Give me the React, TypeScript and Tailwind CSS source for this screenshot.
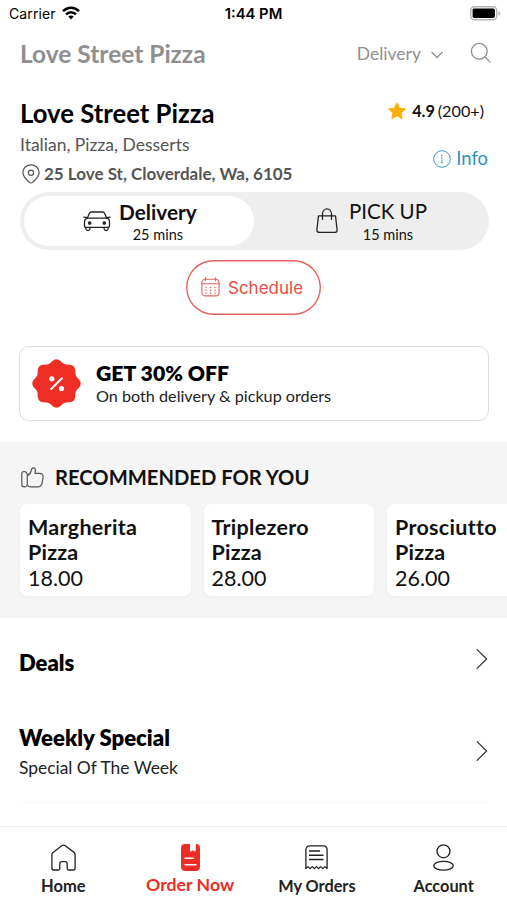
import React from "react";

const Wifi = () => (
  <svg className="h-[14px] w-[18px]" viewBox="0 0 18 14" fill="none" stroke="#000" strokeWidth="2.5">
    <path d="M1 5.2C5.5.6 12.5.6 17 5.2" />
    <path d="M4 8.4c2.9-2.9 7.1-2.9 10 0" />
    <path d="M6.3 10.6c1.6-1.5 3.8-1.5 5.4 0L9 13.4z" fill="#000" stroke="none" />
  </svg>
);

const Battery = () => (
  <svg className="h-[15px] w-[31px]" viewBox="0 0 31 15">
    <rect x="0.75" y="0.75" width="26" height="13" rx="3.8" fill="#fff" stroke="#b4b4b4" strokeWidth="1.4" />
    <rect x="2.6" y="2.6" width="22.3" height="9.3" rx="1.6" fill="#000" />
    <path d="M28.4 5v4.6c1.1-.4 1.7-1.3 1.7-2.3S29.5 5.4 28.4 5z" fill="#b4b4b4" />
  </svg>
);

const Search = () => (
  <svg className="h-[22px] w-[22px]" viewBox="0 0 22 22" fill="none" stroke="#8f8f8f" strokeWidth="1.3" strokeLinecap="round">
    <circle cx="9.3" cy="9.3" r="7.9" />
    <path d="M15 15l5.1 5.1" />
  </svg>
);

const Pin = () => (
  <svg className="h-[20px] w-[18px]" viewBox="0 0 18 20" fill="none" stroke="#555" strokeWidth="1.2">
    <path d="M9 19c-.8 0-1.5-.4-2.2-1.1C4.2 15.4.9 12.7.9 8.6.9 4.1 4.5.9 9 .9s8.1 3.2 8.1 7.7c0 4.1-3.3 6.8-5.9 9.3C10.5 18.6 9.8 19 9 19z" />
    <circle cx="9" cy="8.7" r="2.6" />
  </svg>
);

const Star = () => (
  <svg className="h-[18px] w-[18px]" viewBox="0 0 18 18" fill="#fbaf08" stroke="#fbaf08" strokeWidth="1.5" strokeLinejoin="round">
    <path d="M9 1.3l2.3 5 5.6.6-4.2 3.7 1.2 5.6L9 13.4l-4.9 2.8 1.2-5.6L1.1 6.9l5.600-.6z" />
  </svg>
);

const InfoIcon = () => (
  <svg className="h-[18px] w-[18px]" viewBox="0 0 18 18" fill="none" stroke="#3b9ac6" strokeWidth="1">
    <circle cx="9" cy="9" r="8.3" />
    <path d="M7.900 7.700H9v5M7.700 12.700h2.600" strokeWidth=".8" />
    <circle cx="8.9" cy="5.2" r=".4" fill="#3b9ac6" />
  </svg>
);

const Car = () => (
  <svg className="-mt-px h-[20px] w-[28px]" viewBox="0 0 28 20" fill="none" stroke="#222" strokeWidth="1.3" strokeLinecap="round" strokeLinejoin="round">
    <path d="M4.300 7.300l2-4.800Q6.900 1 8.600 1h10.800q1.700 0 2.300 1.500l2 4.800" />
    <path d="M5 7.200h18c2 0 3.500 1.600 3.500 3.600V15q0 1.300-1.300 1.300H2.800Q1.500 16.300 1.500 15v-4.200c0-2 1.500-3.600 3.500-3.600z" />
    <path d="M.9 6.200l3.200.4M27.100 6.200l-3.200.4" />
    <path d="M2.900 16.500v1.300q0 1.500 1.500 1.500h1q1.500 0 1.500-1.500v-1.300M21.100 16.500v1.300q0 1.500 1.500 1.500h1q1.500 0 1.500-1.500v-1.300" />
    <circle cx="6.7" cy="12" r="1.2" fill="#555" />
    <circle cx="21.3" cy="12" r="1.2" fill="#555" />
  </svg>
);

const Bag = () => (
  <svg className="h-[26px] w-[22px]" viewBox="0 0 22 26" fill="none" stroke="#222" strokeWidth="1.3" strokeLinecap="round" strokeLinejoin="round">
    <path d="M2.500 7.800h17l1.600 13.900q.2 2.700-2.500 2.700H3.400Q.7 24.400.9 21.700z" />
    <path d="M6.500 11.300V6.200C6.500 3.200 8.500.900 11 .900s4.500 2.300 4.500 5.300v5.100" />
  </svg>
);

const Calendar = () => (
  <svg className="-mt-[4px] h-[20px] w-[19px]" viewBox="0 0 19 20" fill="none" stroke="#e5635c" strokeWidth="1.1" strokeLinecap="round">
    <rect x=".9" y="2.2" width="17.2" height="16.7" rx="3.5" />
    <path d="M1 6.700h17M4.500.8v2.800M14.500.8v2.800" />
    <path strokeWidth="1.5" d="M5 10.500h.1M9.500 10.500h.1M14 10.500h.1M5 13.200h.1M9.500 13.200h.1M14 13.200h.1M5 15.900h.1M9.500 15.900h.1M14 15.900h.1" />
  </svg>
);

// Eight-lobed seal outline, sampled in polar coordinates around the centre.
const sealPoints = Array.from({ length: 180 }, (_, i) => {
  const a = (i * Math.PI) / 90;
  const r = 22.6 + 1.6 * Math.cos(8 * a);
  return `${(24.5 + r * Math.cos(a)).toFixed(2)},${(24.5 + r * Math.sin(a)).toFixed(2)}`;
}).join(" ");

const DiscountBadge = () => (
  <svg className="h-[49px] w-[49px]" viewBox="0 0 49 49">
    <polygon points={sealPoints} fill="#ee2d24" />
    <path d="M19.200 30L29.900 19.300" stroke="#fff" strokeWidth="2" strokeLinecap="round" />
    <circle cx="19.8" cy="19.8" r="2.6" fill="#fff" />
    <circle cx="29.5" cy="29.5" r="2.6" fill="#fff" />
  </svg>
);

const ThumbUp = () => (
  <svg className="h-[21px] w-[23px]" viewBox="0 0 23 21" fill="none" stroke="#555" strokeWidth="1.2" strokeLinejoin="round">
    <path d="M6.300 7.500Q5.700 4.500 3 4.500.8 4.500.8 7v10.200q0 2.600 2.600 2.600 2.900 0 2.900-2.800z" />
    <path d="M6.300 8.300c2.300-.5 3.300-2 3.800-4.300.3-1.900.7-3.200 2.200-3.200 1.700 0 2.300 1.400 2.100 3.100-.1 1.200-.6 1.700-.4 2.500h4.400c2.500 0 4 1.500 3.700 3.800l-1 6c-.4 2.300-1.500 3.600-3.900 3.600H9.800c-1.700 0-2.500-.5-3.500-1.500" />
  </svg>
);

const Chevron = () => (
  <svg className="h-[22px] w-[12px]" viewBox="0 0 12 22" fill="none" stroke="#333" strokeWidth="1.2" strokeLinecap="round" strokeLinejoin="round">
    <path d="M1.100 1.600L10.600 11l-9.500 9.400" />
  </svg>
);

const Home = () => (
  <svg className="h-[27px] w-[25px]" viewBox="0 0 25 27" fill="none" stroke="#222" strokeWidth="1.3" strokeLinejoin="round">
    <path d="M11 1.600L2 8.400Q.9 9.200.9 10.500V24q0 2 2 2h4.500q1.400 0 1.400-1.500v-4.700q0-2.100 2.100-2.100h3.200q2.100 0 2.100 2.100v4.700q0 1.500 1.400 1.500h4.500q2 0 2-2V10.500q0-1.300-1.100-2.100L14 1.600q-1.500-1.100-3 0z" />
  </svg>
);

const OrderBook = () => (
  <svg className="h-[27px] w-[19px]" viewBox="0 0 19 27">
    <path d="M4 0h5v6.500q0 1.700 1.400.7l1.400-1 1.500 1q1.500 1 1.500-.7V0Q19 .2 19 4v18.500q0 4.500-4.500 4.500h-10Q0 27 0 22.500V4Q0 0 4 0z" fill="#ee2d24" />
    <path d="M4 14.300h8.500M4 20.700h11" stroke="#fff" strokeWidth="1.4" strokeLinecap="round" />
  </svg>
);

const Receipt = () => (
  <svg className="h-[25px] w-[23px]" viewBox="0 0 23 25" fill="none" stroke="#222" strokeWidth="1.3" strokeLinejoin="round">
    <path d="M.9 23.600V4.900Q.9.900 4.900.900h13.200q4 0 4 4v18.700l-2.120-2-2.120 2-2.120-2-2.120 2-2.120-2-2.120 2-2.120-2-2.120 2-2.120-2z" />
    <path d="M4 6h11M4 10.200h14.500M4 14.400h14.500" strokeWidth="1.5" />
  </svg>
);

const Account = () => (
  <svg className="h-[27px] w-[21px]" viewBox="0 0 21 27" fill="none" stroke="#222" strokeWidth="1.3">
    <circle cx="10.5" cy="7.3" r="6.5" />
    <ellipse cx="10.5" cy="21.8" rx="9.8" ry="4.4" />
  </svg>
);

const dishes = [
  { name: "Margherita", price: "18.00" },
  { name: "Triplezero", price: "28.00" },
  { name: "Prosciutto", price: "26.00" },
];

const tabs = [
  { label: "Home", icon: <Home />, style: "text-[16.5px] text-[#222]" },
  { label: "Order Now", icon: <OrderBook />, style: "text-[17.7px] -translate-y-px text-[#ee2d24]" },
  { label: "My Orders", icon: <Receipt />, style: "text-[16.3px] text-[#222]" },
  { label: "Account", icon: <Account />, style: "text-[16.3px] text-[#222]" },
];

export default function App() {
  return (
    <div className="flex h-[900px] w-[507px] flex-col overflow-hidden bg-white font-['Lato',sans-serif] text-[#111]">
      <div className="grid h-[26px] shrink-0 grid-cols-3 items-center pr-[7px] pl-[9px] font-['Inter',sans-serif] text-[14px] text-black">
        <div className="flex items-center gap-[6px]">
          <span className="tracking-[0.1px]">Carrier</span>
          <Wifi />
        </div>
        <span className="-ml-[2px] pt-[2px] text-center text-[14.8px] font-semibold">1:44 PM</span>
        <div className="-mr-px flex justify-end">
          <Battery />
        </div>
      </div>

      <header className="mt-[2px] flex h-[52px] shrink-0 items-center pr-[15px] pl-[20px] text-[#8f8f8f]">
        <span className="flex-1 text-[24.5px] font-bold">Love Street Pizza</span>
        <span className="text-[17.5px]">Delivery</span>
        <svg className="mt-[2px] ml-[10px] h-[8px] w-[12px]" viewBox="0 0 12 8" fill="none" stroke="#8f8f8f" strokeWidth="1.3" strokeLinecap="round">
          <path d="M1 1.500l5 5 5-5" />
        </svg>
        <div className="-mt-[2px] ml-[27px]">
          <Search />
        </div>
      </header>

      <section className="flex h-[112px] shrink-0 justify-between pt-[15px] pr-[19px] pl-[20px]">
        <div>
          <h1 className="pt-px text-[25.7px] leading-[34px] font-bold text-black">Love Street Pizza</h1>
          <p className="text-[17.5px] leading-[30px] text-[#555]">Italian, Pizza, Desserts</p>
          <p className="flex items-center gap-[4px] pl-[2px] text-[17px] leading-[27px] font-bold text-[#555]">
            <Pin />
            25 Love St, Cloverdale, Wa, 6105
          </p>
        </div>
        <div className="flex flex-col items-end">
          <div className="mr-[4px] flex h-[32px] items-center text-[16.2px]">
            <Star />
            <span className="ml-[6px] font-bold">4.9</span>
            <span className="ml-[3px]">(200+)</span>
          </div>
          <div className="mt-[17px] flex h-[30px] items-center gap-[5px] text-[18.4px] text-[#2b93c3]">
            <InfoIcon />
            Info
          </div>
        </div>
      </section>

      <div className="mr-[18px] ml-[20px] flex h-[58px] shrink-0 rounded-full bg-[#eee] p-[4px]">
        <div className="flex w-[230px] items-center rounded-full bg-white pl-[59px]">
          <Car />
          <div className="ml-[8px] flex flex-col items-center pt-px">
            <span className="text-[20.8px] leading-[25px] font-bold">Delivery</span>
            <span className="text-[14.5px] leading-[21px]">25 mins</span>
          </div>
        </div>
        <div className="flex flex-1 items-center pl-[62px]">
          <Bag />
          <div className="ml-[11px] flex flex-col items-center pt-[2px]">
            <span className="text-[20.5px] leading-[25px]">PICK UP</span>
            <span className="text-[14.5px] leading-[21px]">15 mins</span>
          </div>
        </div>
      </div>

      <button className="mt-[10px] ml-[186px] flex h-[55px] w-[135px] shrink-0 items-center gap-[8px] rounded-full pt-[2px] pl-[15px] font-['Inter',sans-serif] text-[17px] text-[#e84c43] shadow-[inset_0_0_0_1.4px_#e5635c]">
        <Calendar />
        Schedule
      </button>

      <div className="mt-[31px] mr-[18px] ml-[19px] flex h-[75px] shrink-0 items-center rounded-[10px] border border-[#dcdcdc] pl-[12px]">
        <DiscountBadge />
        <div className="ml-[15px] pt-px">
          <div className="text-[21.2px] leading-[24px] font-extrabold text-black">GET 30% OFF</div>
          <div className="text-[16.2px] leading-[22px] text-[#222]">On both delivery &amp; pickup orders</div>
        </div>
      </div>

      <section className="mt-[21px] h-[176px] shrink-0 overflow-hidden bg-[#f5f5f5] pl-[20px]">
        <div className="flex h-[62px] items-center pt-[8px]">
          <div className="pl-[1px]">
            <ThumbUp />
          </div>
          <h2 className="ml-[11px] text-[20.2px] font-bold">RECOMMENDED FOR YOU</h2>
        </div>
        <div className="flex w-[600px] gap-[13px]">
          {dishes.map((d) => (
            <div key={d.name} className="h-[92px] w-[170.5px] shrink-0 rounded-[8px] bg-white px-[8px] pt-[10.5px] text-[21.5px] leading-[25.5px] shadow-[0_1px_4px_rgba(0,0,0,0.03)]">
              <div className="font-bold tracking-[0.3px]">{d.name}</div>
              <div className="font-bold tracking-[0.2px]">Pizza</div>
              <div>{d.price}</div>
            </div>
          ))}
        </div>
      </section>

      <section className="flex h-[185px] shrink-0 flex-col px-[19px]">
        <div className="flex h-[83px] items-center justify-between text-black">
          <h3 className="pt-[6px] text-[22px] font-extrabold">Deals</h3>
          <div className="-mt-[2px]">
            <Chevron />
          </div>
        </div>
        <div className="flex h-[102px] items-center justify-between border-b border-[#f9f9f9]">
          <div className="pt-[3px]">
            <h3 className="text-[22.1px] leading-[30px] font-extrabold text-black">Weekly Special</h3>
            <p className="text-[17.4px] leading-[30px] text-[#222]">Special Of The Week</p>
          </div>
          <div className="-mt-[2px]">
            <Chevron />
          </div>
        </div>
      </section>

      <nav className="mt-auto grid h-[74px] shrink-0 grid-cols-4 border-t border-[#ececec]">
        {tabs.map((t) => (
          <div key={t.label} className="flex flex-col items-center">
            <div className="mt-[16px] flex h-[28px] items-center">{t.icon}</div>
            <span className={`mt-[5px] leading-[20px] font-bold ${t.style}`}>{t.label}</span>
          </div>
        ))}
      </nav>
    </div>
  );
}
